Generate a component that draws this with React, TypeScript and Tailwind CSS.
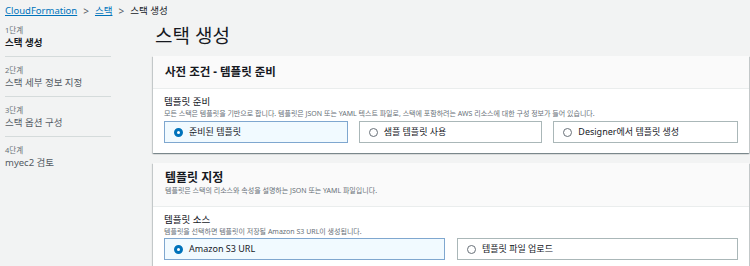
import React from 'react';

type Step = { label: string; title: string; active?: boolean };

const steps: Step[] = [
  { label: '1단계', title: '스택 생성', active: true },
  { label: '2단계', title: '스택 세부 정보 지정' },
  { label: '3단계', title: '스택 옵션 구성' },
  { label: '4단계', title: 'myec2 검토' },
];

const font = "font-['Noto_Sans','Noto_Sans_CJK_KR',sans-serif]";

function Radio({ checked }: { checked?: boolean }) {
  if (checked) {
    return <span className="block w-[9px] h-[9px] rounded-full border-[3px] border-[#0073bb] bg-white shrink-0" />;
  }
  return <span className="block w-[9px] h-[9px] rounded-full border border-[#687078] bg-white shrink-0" />;
}

function Tile({ text, checked, className }: { text: string; checked?: boolean; className: string }) {
  return (
    <div
      className={
        'h-[22px] flex items-center gap-[6px] px-[9px] text-[9px] text-[#16191f] border ' +
        (checked ? 'bg-[#f1faff] border-[#7fa7cf]' : 'bg-white border-[#aab7b8]') +
        ' ' +
        className
      }
    >
      <Radio checked={checked} />
      <span>{text}</span>
    </div>
  );
}

export default function App() {
  return (
    <div className={`w-[750px] h-[266px] overflow-hidden bg-[#f2f3f3] ${font}`}>
      {/* breadcrumb */}
      <div className="h-[18px] pl-[5px] pt-[3px] flex items-center gap-[6px] text-[9.5px] leading-[12px]">
        <span className="text-[#0073bb] underline">CloudFormation</span>
        <span className="text-[#545b64] text-[10px]">&gt;</span>
        <span className="text-[#0073bb] underline">스택</span>
        <span className="text-[#545b64] text-[10px]">&gt;</span>
        <span className="text-[#16191f]">스택 생성</span>
      </div>

      <div className="flex">
        {/* steps */}
        <div className="w-[106px] ml-[5px] pt-[6px]">
          {steps.map((s, i) => (
            <div
              key={s.label}
              className={
                (i === 0 ? 'h-[33px]' : 'h-[40px] pt-[7px]') +
                (i < steps.length - 1 ? ' border-b border-[#d5dbdb]' : '')
              }
            >
              <div className="text-[7.5px] leading-[12px] text-[#687078]">{s.label}</div>
              <div
                className={
                  'text-[9.5px] leading-[13px] ' +
                  (s.active ? 'font-bold text-[#16191f]' : 'text-[#545b64]')
                }
              >
                {s.title}
              </div>
            </div>
          ))}
        </div>

        {/* main */}
        <div className="ml-[42px] w-[596px]">
          <div className="h-[38px] flex items-center pl-[2px] pb-[1px]">
            <h1 className="text-[19px] text-[#16191f] leading-none">스택 생성</h1>
          </div>

          {/* card 1 */}
          <div className="bg-white shadow-[0_1px_1px_0_rgba(0,28,36,0.3),1px_1px_1px_0_rgba(0,28,36,0.15),-1px_1px_1px_0_rgba(0,28,36,0.15)]">
            <div className="h-[33px] bg-[#fafafa] border-b border-[#eaeded] flex items-center px-[12px]">
              <h2 className="text-[11.5px] font-bold text-[#16191f]">사전 조건 - 템플릿 준비</h2>
            </div>
            <div className="px-[11px] pt-[7px] pb-[10px]">
              <div className="text-[9.5px] leading-[12px] text-[#16191f]">템플릿 준비</div>
              <div className="text-[7px] leading-[11px] text-[#687078]">
                모든 스택은 템플릿을 기반으로 합니다. 템플릿은 JSON 또는 YAML 텍스트 파일로, 스택에 포함하려는 AWS 리소스에 대한 구성 정보가 들어 있습니다.
              </div>
              <div className="flex gap-[11px] mt-[2px]">
                <Tile text="준비된 템플릿" checked className="w-[184px]" />
                <Tile text="샘플 템플릿 사용" className="w-[184px]" />
                <Tile text="Designer에서 템플릿 생성" className="w-[185px]" />
              </div>
            </div>
          </div>

          {/* card 2 */}
          <div className="mt-[10px] bg-white shadow-[0_1px_1px_0_rgba(0,28,36,0.3),1px_1px_1px_0_rgba(0,28,36,0.15),-1px_1px_1px_0_rgba(0,28,36,0.15)]">
            <div className="h-[44px] bg-[#fafafa] border-b border-[#eaeded] px-[12px] pt-[7px]">
              <h2 className="text-[12px] leading-[15px] font-bold text-[#16191f]">템플릿 지정</h2>
              <div className="text-[7px] leading-[12px] text-[#687078]">
                템플릿은 스택의 리소스와 속성을 설명하는 JSON 또는 YAML 파일입니다.
              </div>
            </div>
            <div className="px-[11px] pt-[6px] pb-[10px]">
              <div className="text-[9.5px] leading-[13px] text-[#16191f]">템플릿 소스</div>
              <div className="text-[7px] leading-[11px] text-[#687078]">
                템플릿을 선택하면 템플릿이 저장될 Amazon S3 URL이 생성됩니다.
              </div>
              <div className="flex gap-[12px] mt-[1px]">
                <Tile text="Amazon S3 URL" checked className="w-[281px]" />
                <Tile text="템플릿 파일 업로드" className="w-[281px]" />
              </div>
            </div>
          </div>
        </div>
      </div>
    </div>
  );
}
